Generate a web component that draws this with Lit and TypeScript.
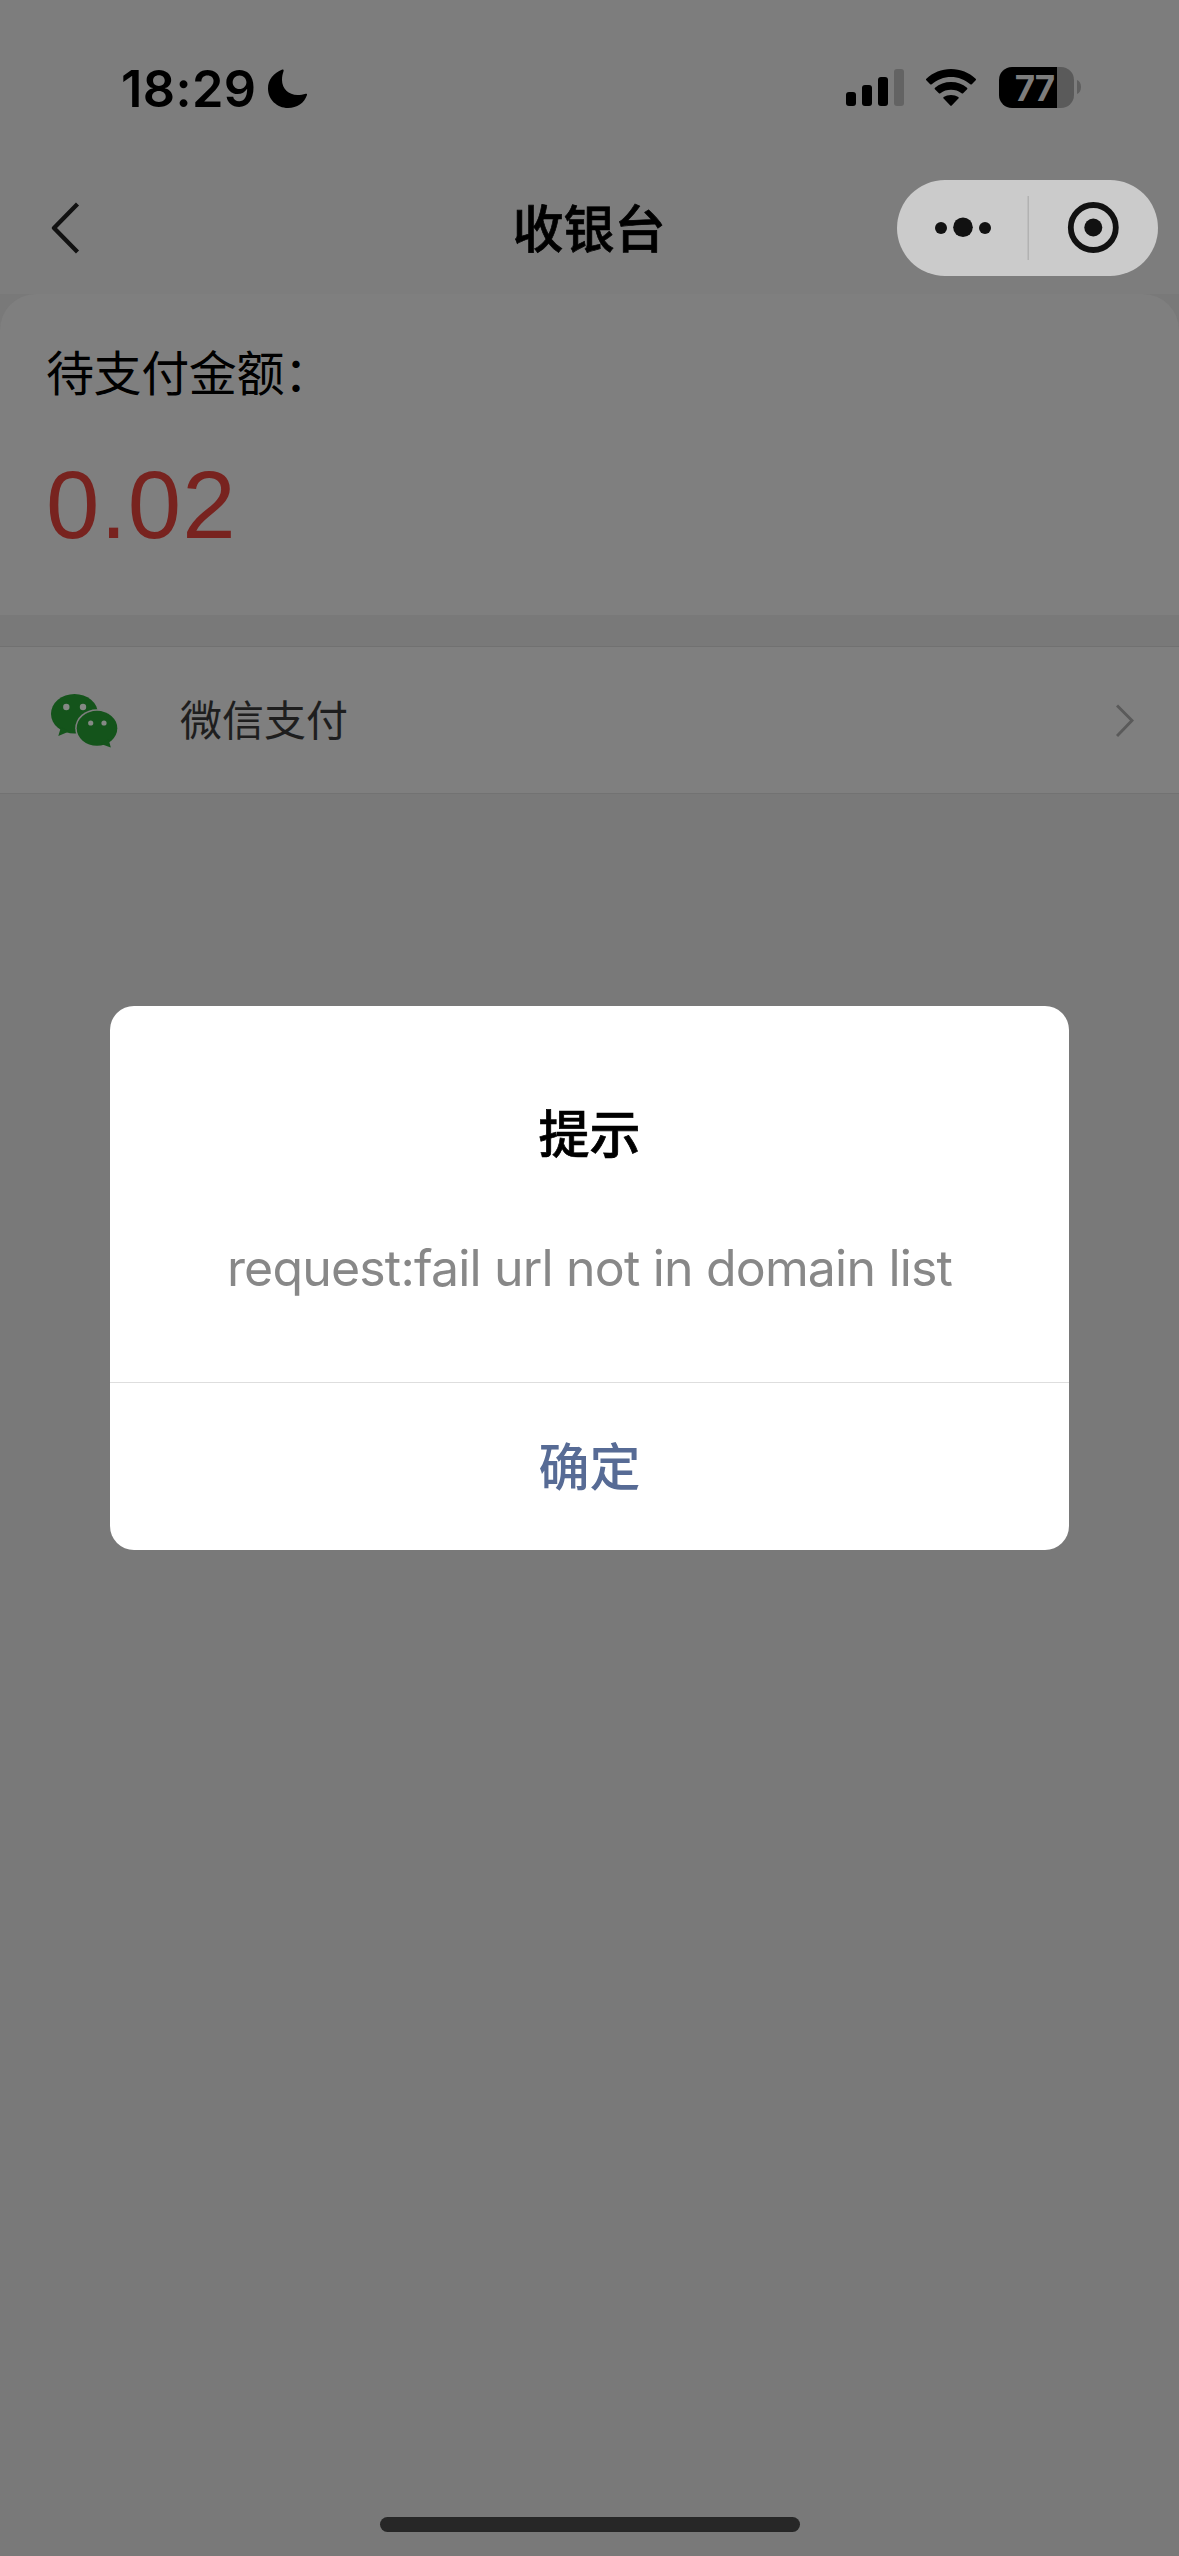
import { LitElement, html, css } from "lit";
import { customElement, property } from "lit/decorators.js";

@customElement("status-bar")
class StatusBar extends LitElement {
  @property() time = "";
  @property() battery = "";

  static styles = css`
    :host {
      display: flex;
      justify-content: space-between;
      box-sizing: border-box;
      height: 162px;
      padding: 67px 98px 0 121px;
      font-family: Inter, "Liberation Sans", sans-serif;
    }
    .left,
    .right {
      display: flex;
      align-items: flex-start;
    }
    .time {
      font-size: 50.5px;
      font-weight: 600;
      line-height: 43px;
      width: 147px;
      letter-spacing: 0.4px;
      color: #000;
      white-space: nowrap;
    }
    .moon {
      margin-top: 2px;
    }
    .signal {
      margin: 2px 22px 0 0;
    }
    .wifi {
      margin: 2px 23px 0 0;
    }
    .battery {
      display: flex;
      justify-content: center;
      box-sizing: border-box;
      width: 75px;
      height: 41px;
      padding-right: 4px;
      border-radius: 13px;
      background: linear-gradient(90deg, #000 58px, #5a5a5a 58px);
      color: #7d7d7d;
      font-size: 35px;
      font-weight: 700;
      line-height: 42px;
      letter-spacing: -1px;
    }
    .tip {
      margin: 13px 0 0 3px;
    }
    svg {
      display: block;
    }
  `;

  render() {
    return html`
      <div class="left">
        <span class="time">${this.time}</span>
        <svg class="moon" width="39" height="39" viewBox="0 0 39 39">
          <path d="M14.3.6C5.6 4 0 11 0 19.5 0 30.5 9 39 20 39c9 0 16.300-5 19-13q.4-1.600-1.300-1.200c-2.700.8-5.200 1.200-8.200 1.200-9 0-15.500-6.500-15.500-15 0-3.500.6-6 1.600-9Q15.900 0 14.300.6Z" />
        </svg>
      </div>
      <div class="right">
        <svg class="signal" width="58" height="37" viewBox="0 0 58 37">
          <rect y="23" width="10" height="14" rx="3" />
          <rect x="16" y="16" width="10" height="21" rx="3" />
          <rect x="32" y="8" width="10" height="29" rx="3" />
          <rect x="48" width="10" height="37" rx="3" fill="#636363" />
        </svg>
        <svg class="wifi" width="50" height="37" viewBox="0 0 50 37">
          <path d="M.4 9.700C7 3.500 15.500 0 25 0s18 3.500 24.600 9.700q.8.800.1 1.500l-3.900 4q-.7.700-1.500 0C39 10.500 32.300 7.900 25 7.900S11 10.500 5.700 15.200q-.8.700-1.500 0l-3.900-4q-.7-.7.1-1.500Z" />
          <path d="M9 18.700c4.300-3.600 10-5.600 16-5.600s11.700 2 16 5.600q.8.700.1 1.500l-4 4q-.7.600-1.500 0c-3-2.300-6.600-3.400-10.600-3.400s-7.600 1.100-10.600 3.400q-.8.600-1.500 0l-4-4q-.7-.8.1-1.500Z" />
          <path d="M17.700 28c2-1.300 4.600-2.100 7.300-2.100s5.300.8 7.300 2.100q.9.700.1 1.600l-6.700 7q-.7.700-1.400 0l-6.700-7q-.8-.9.100-1.600Z" />
        </svg>
        <div class="battery">${this.battery}</div>
        <svg class="tip" width="4" height="14" viewBox="0 0 4 14">
          <path d="M0 0c2.500 1 4 3.600 4 7s-1.500 6-4 7Z" fill="#5f5f5f" />
        </svg>
      </div>
    `;
  }
}

@customElement("nav-bar")
class NavBar extends LitElement {
  @property() heading = "";

  static styles = css`
    :host {
      display: grid;
      grid-template-columns: 1fr auto 1fr;
      align-items: center;
      box-sizing: border-box;
      height: 132px;
      padding: 0 21px 0 51px;
    }
    .title {
      font-size: 51px;
      font-weight: 500;
      line-height: 72px;
      color: #000;
      -webkit-text-stroke: 0.7px #000;
      margin-left: -31px;
      padding-top: 6px;
    }
    .capsule {
      justify-self: end;
      display: block;
    }
    .back {
      display: block;
    }
  `;

  render() {
    return html`
      <svg class="back" width="30" height="56" viewBox="0 0 30 56" fill="none" stroke="#111" stroke-width="4.300" stroke-linejoin="round">
        <path d="M26.500 4 3 28 26.500 52" />
      </svg>
      <span class="title">${this.heading}</span>
      <svg class="capsule" width="261" height="96" viewBox="0 0 261 96">
        <rect width="261" height="96" rx="48" fill="#cbcbcb" />
        <g fill="#111">
          <circle cx="44" cy="48" r="6" />
          <circle cx="66" cy="47.300" r="9.800" />
          <circle cx="88" cy="48" r="6" />
          <circle cx="196.300" cy="47.500" r="9" />
        </g>
        <circle cx="196.300" cy="47.500" r="22.500" fill="none" stroke="#111" stroke-width="5.800" />
        <rect x="130.500" y="16" width="1.500" height="64" fill="#b2b2b2" />
      </svg>
    `;
  }
}

@customElement("pay-dialog")
class PayDialog extends LitElement {
  @property() heading = "";
  @property() message = "";
  @property() confirm = "";

  static styles = css`
    :host {
      display: flex;
      flex-direction: column;
      box-sizing: border-box;
      width: 959px;
      height: 544px;
      border-radius: 24px;
      background: #fff;
      text-align: center;
      overflow: hidden;
    }
    .body {
      flex: 1;
      padding-top: 94px;
    }
    .heading {
      font-size: 51px;
      font-weight: 500;
      line-height: 72px;
      color: #000;
      -webkit-text-stroke: 0.7px #000;
    }
    .message {
      margin-top: 60px;
      font-family: Inter, "Liberation Sans", sans-serif;
      font-size: 50px;
      line-height: 72px;
      letter-spacing: -0.82px;
      color: #888;
      white-space: nowrap;
    }
    .confirm {
      height: 167px;
      border-top: 1px solid #dedede;
      font-size: 51px;
      font-weight: 500;
      line-height: 172px;
      color: #576b95;
    }
  `;

  render() {
    return html`
      <div class="body">
        <div class="heading">${this.heading}</div>
        <div class="message">${this.message}</div>
      </div>
      <div class="confirm">${this.confirm}</div>
    `;
  }
}

@customElement("app-root")
class AppRoot extends LitElement {
  static styles = css`
    :host {
      position: relative;
      display: flex;
      flex-direction: column;
      width: 1179px;
      height: 2556px;
      overflow: hidden;
      background: #797979;
      font-family: "Liberation Sans", "Noto Sans CJK SC", sans-serif;
    }
    .top {
      background: #7d7d7d;
    }
    .amount {
      box-sizing: border-box;
      height: 321px;
      padding: 45px 46px 0;
      border-radius: 36px 36px 0 0;
      background: #7f7f7f;
    }
    .label {
      font-size: 48px;
      font-weight: 400;
      line-height: 72px;
      letter-spacing: -0.4px;
      color: #000;
    }
    .value {
      margin-top: 39px;
      font-size: 96px;
      line-height: 110px;
      letter-spacing: 0.9px;
      color: #78231f;
    }
    .method {
      display: flex;
      align-items: center;
      box-sizing: border-box;
      height: 148px;
      margin-top: 31px;
      padding: 1px 45px 0 51px;
      border-top: 1px solid #717171;
      border-bottom: 1px solid #727272;
      background: #7f7f7f;
    }
    .name {
      flex: 1;
      margin-left: 62px;
      padding-top: 2px;
      font-size: 42px;
      line-height: 60px;
      color: #1e1e1e;
    }
    .home {
      width: 420px;
      height: 15px;
      margin: auto auto 24px;
      border-radius: 8px;
      background: #272727;
    }
    .overlay {
      position: absolute;
      inset: 0;
      display: flex;
      align-items: center;
      justify-content: center;
    }
    svg {
      display: block;
    }
  `;

  render() {
    return html`
      <div class="top">
        <status-bar time="18:29" battery="77"></status-bar>
        <nav-bar heading="收银台"></nav-bar>
      </div>
      <div class="amount">
        <div class="label">待支付金额：</div>
        <div class="value">0.02</div>
      </div>
      <div class="method">
        <svg width="67" height="54" viewBox="0 0 67 54">
          <g fill="#14541b">
            <ellipse cx="23.500" cy="19.800" rx="23.500" ry="19.800" />
            <path d="M10 33 7.300 42 18 37.500Z" />
          </g>
          <ellipse cx="46" cy="34.300" rx="21.800" ry="19" fill="#7f7f7f" />
          <g fill="#14541b">
            <ellipse cx="46" cy="34.300" rx="20.300" ry="17.500" />
            <path d="M50 50 59.800 53.500 57.500 45Z" />
          </g>
          <g fill="#858985">
            <circle cx="15.300" cy="13" r="3.200" />
            <circle cx="32" cy="13" r="3.200" />
            <circle cx="39.700" cy="29" r="2.600" />
            <circle cx="53" cy="29" r="2.600" />
          </g>
        </svg>
        <span class="name">微信支付</span>
        <svg width="18" height="34" viewBox="0 0 18 34" fill="none" stroke="#5a5a5a" stroke-width="3">
          <path d="M1 1.500 16 16.500 1 32" />
        </svg>
      </div>
      <div class="home"></div>
      <div class="overlay">
        <pay-dialog heading="提示" message="request:fail url not in domain list" confirm="确定"></pay-dialog>
      </div>
    `;
  }
}
